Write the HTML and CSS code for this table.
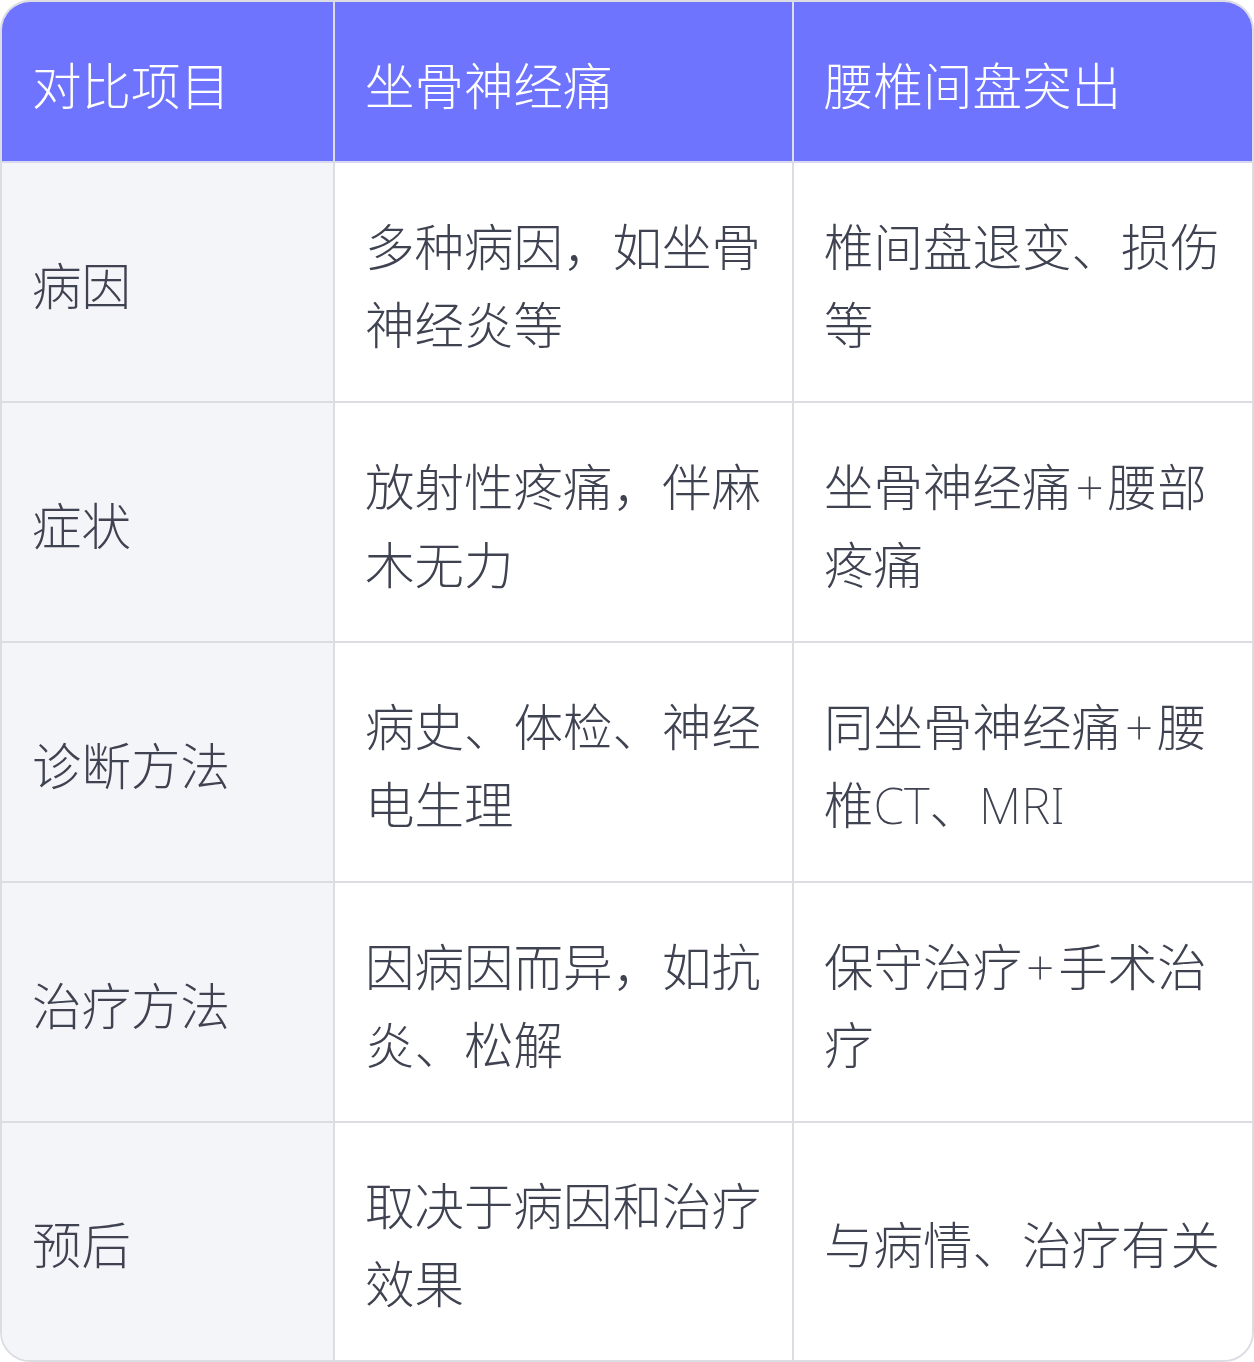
FILE: index.html
```html
<!DOCTYPE html>
<html lang="zh-CN">
<head>
<meta charset="utf-8">
<link rel="stylesheet" href="styles.css">
</head>
<body>
<div class="wrap">
<table class="cmp">
  <colgroup>
    <col class="c1"><col class="c2"><col class="c3">
  </colgroup>
  <thead>
    <tr class="head">
      <th>对比项目</th>
      <th>坐骨神经痛</th>
      <th>腰椎间盘突出</th>
    </tr>
  </thead>
  <tbody>
    <tr>
      <td class="key">病因</td>
      <td>多种病因，如坐骨神经炎等</td>
      <td>椎间盘退变、损伤等</td>
    </tr>
    <tr>
      <td class="key">症状</td>
      <td>放射性疼痛，伴麻木无力</td>
      <td>坐骨神经痛<span class="op">+</span>腰部疼痛</td>
    </tr>
    <tr>
      <td class="key">诊断方法</td>
      <td>病史、体检、神经电生理</td>
      <td>同坐骨神经痛<span class="op">+</span>腰椎CT、MRI</td>
    </tr>
    <tr>
      <td class="key">治疗方法</td>
      <td>因病因而异，如抗炎、松解</td>
      <td>保守治疗<span class="op">+</span>手术治疗</td>
    </tr>
    <tr>
      <td class="key">预后</td>
      <td>取决于病因和治疗效果</td>
      <td>与病情、治疗有关</td>
    </tr>
  </tbody>
</table>
</div>
</body>
</html>
```
FILE: styles.css
```css
html, body {
  margin: 0;
  padding: 0;
  background: #ffffff;
}
.wrap {
  width: 1254px;
}
.cmp {
  width: 1254px;
  table-layout: fixed;
  border-collapse: separate;
  border-spacing: 0;
  border: 2px solid #dcdde3;
  border-radius: 30px;
  overflow: hidden;
  font-family: "Noto Sans", "Noto Sans CJK SC", sans-serif;
  font-weight: 200;
  font-size: 49.5px;
  line-height: 78px;
  color: #3f4250;
}
.c1 { width: 333px; }
.c2 { width: 459px; }
.c3 { width: auto; }
.cmp th, .cmp td {
  text-align: left;
  vertical-align: middle;
  padding: 0 18px 0 30px;
  border-right: 2px solid #dcdde3;
  border-bottom: 2px solid #dcdde3;
  overflow-wrap: anywhere;
}
.cmp th:last-child, .cmp td:last-child {
  border-right: none;
}
.cmp tbody tr:last-child td {
  border-bottom: none;
  height: 237px;
}
.head th {
  height: 161px;
  background: #6e74fe;
  color: #ffffff;
  font-weight: 200;
  border-bottom-color: #d8d9f0;
  padding-top: 9px;
  box-sizing: border-box;
}
.cmp td {
  height: 240px;
  box-sizing: border-box;
  background: #ffffff;
  padding-top: 7px;
}
.cmp td.key {
  background: #f4f5f9;
}
.op {
  margin: 0 4px;
}
```
